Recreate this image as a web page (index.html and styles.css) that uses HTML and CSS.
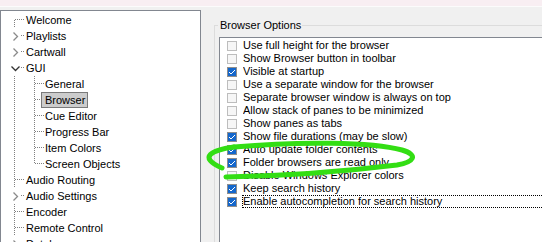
FILE: index.html
```html
<!DOCTYPE html>
<html lang="en">
<head>
    <meta charset="UTF-8">
    <meta name="viewport" content="width=device-width, initial-scale=1.0">
    <title>Options - Browser</title>
    <link rel="stylesheet" href="styles.css">
</head>
<body>

    <div class="caption"></div>

    <div class="main">

        <div class="tree">
            <div class="node lvl0 first"><span class="label">Welcome</span></div>
            <div class="node lvl0 kids"><span class="chev"><svg width="7" height="9" viewBox="0 0 7 9"><polyline points="1.5,0.5 5.5,4.5 1.5,8.5" fill="none" stroke="#8a8a8a" stroke-width="1.3"/></svg></span><span class="label">Playlists</span></div>
            <div class="node lvl0 kids"><span class="chev"><svg width="7" height="9" viewBox="0 0 7 9"><polyline points="1.5,0.5 5.5,4.5 1.5,8.5" fill="none" stroke="#8a8a8a" stroke-width="1.3"/></svg></span><span class="label">Cartwall</span></div>
            <div class="node lvl0 kids open"><span class="chev"><svg width="9" height="7" viewBox="0 0 9 7"><polyline points="0.5,1.5 4.5,5.5 8.5,1.5" fill="none" stroke="#333" stroke-width="1.3"/></svg></span><span class="label">GUI</span></div>
            <div class="node lvl1"><span class="label">General</span></div>
            <div class="node lvl1"><span class="label selected">Browser</span></div>
            <div class="node lvl1"><span class="label">Cue Editor</span></div>
            <div class="node lvl1"><span class="label">Progress Bar</span></div>
            <div class="node lvl1"><span class="label">Item Colors</span></div>
            <div class="node lvl1 last"><span class="label">Screen Objects</span></div>
            <div class="node lvl0"><span class="label">Audio Routing</span></div>
            <div class="node lvl0 kids"><span class="chev"><svg width="7" height="9" viewBox="0 0 7 9"><polyline points="1.5,0.5 5.5,4.5 1.5,8.5" fill="none" stroke="#8a8a8a" stroke-width="1.3"/></svg></span><span class="label">Audio Settings</span></div>
            <div class="node lvl0"><span class="label">Encoder</span></div>
            <div class="node lvl0"><span class="label">Remote Control</span></div>
            <div class="node lvl0 kids"><span class="chev"><svg width="7" height="9" viewBox="0 0 7 9"><polyline points="1.5,0.5 5.5,4.5 1.5,8.5" fill="none" stroke="#8a8a8a" stroke-width="1.3"/></svg></span><span class="label">Database</span></div>
        </div>

        <div class="page">
            <fieldset class="group">
                <legend>Browser Options</legend>
                <div class="checklist">
                    <div class="item"><span class="cb"></span><span class="text">Use full height for the browser</span></div>
                    <div class="item"><span class="cb"></span><span class="text">Show Browser button in toolbar</span></div>
                    <div class="item"><span class="cb on"><svg width="8" height="8" viewBox="0 0 8 8"><polyline points="1,4 3,6 7,2" fill="none" stroke="#fff" stroke-width="1"/></svg></span><span class="text">Visible at startup</span></div>
                    <div class="item"><span class="cb"></span><span class="text">Use a separate window for the browser</span></div>
                    <div class="item"><span class="cb"></span><span class="text">Separate browser window is always on top</span></div>
                    <div class="item"><span class="cb"></span><span class="text">Allow stack of panes to be minimized</span></div>
                    <div class="item"><span class="cb"></span><span class="text">Show panes as tabs</span></div>
                    <div class="item"><span class="cb on"><svg width="8" height="8" viewBox="0 0 8 8"><polyline points="1,4 3,6 7,2" fill="none" stroke="#fff" stroke-width="1"/></svg></span><span class="text">Show file durations (may be slow)</span></div>
                    <div class="item"><span class="cb on"><svg width="8" height="8" viewBox="0 0 8 8"><polyline points="1,4 3,6 7,2" fill="none" stroke="#fff" stroke-width="1"/></svg></span><span class="text">Auto update folder contents</span></div>
                    <div class="item"><span class="cb on"><svg width="8" height="8" viewBox="0 0 8 8"><polyline points="1,4 3,6 7,2" fill="none" stroke="#fff" stroke-width="1"/></svg></span><span class="text">Folder browsers are read only</span></div>
                    <div class="item"><span class="cb"></span><span class="text">Disable Windows Explorer colors</span></div>
                    <div class="item"><span class="cb on"><svg width="8" height="8" viewBox="0 0 8 8"><polyline points="1,4 3,6 7,2" fill="none" stroke="#fff" stroke-width="1"/></svg></span><span class="text">Keep search history</span></div>
                    <div class="item"><span class="cb on"><svg width="8" height="8" viewBox="0 0 8 8"><polyline points="1,4 3,6 7,2" fill="none" stroke="#fff" stroke-width="1"/></svg></span><span class="text focus">Enable autocompletion for search history</span></div>
                </div>
            </fieldset>
        </div>

    </div>

    <!-- hand-drawn highlight round the "read only" option -->
    <svg class="scribble" width="542" height="242" viewBox="0 0 542 242">
        <path d="M234 147 C300 141 372 142 402 150 C419 155 414 162 397 165 C340 172 280 176 226 177" fill="none" stroke="#33de14" stroke-width="5" stroke-linecap="round"/>
        <path d="M234 147 C212 150 197 157 222 168" fill="none" stroke="#33de14" stroke-width="5" stroke-linecap="round"/>
    </svg>

</body>
</html>
```

FILE: styles.css
```css
body {
    margin: 0;
    background-color: #f0f0f0;
    font-family: "Liberation Sans", Arial, sans-serif;
    font-size: 11px;
    color: #000;
    overflow: hidden;
    height: 242px;
}

.caption {
    height: 6px;
    background-color: #f8eef2;
    border-bottom: 1px solid #fbfbfb;
    margin-bottom: 3px;
}

.main {
    display: flex;
}

/* left tree */
.tree {
    flex: none;
    width: 199px;
    height: 260px;
    background-color: #fff;
    border: 1px solid #828790;
    border-bottom: none;
    padding-top: 1px;
}

.node {
    height: 16px;
    display: flex;
    align-items: center;
    position: relative;
    background-repeat: no-repeat;
}

.lvl0 {
    padding-left: 21px;
    background-image:
        repeating-linear-gradient(#808080 0 1px, transparent 1px 2px),
        repeating-linear-gradient(to right, #808080 0 1px, transparent 1px 2px);
    background-position: 13px 0, 14px 7px;
    background-size: 1px 16px, 10px 1px;
}

.lvl0.first {
    background-position: 13px 8px, 14px 7px;
    background-size: 1px 8px, 10px 1px;
}

.lvl1 {
    padding-left: 40px;
    background-image:
        repeating-linear-gradient(#808080 0 1px, transparent 1px 2px),
        repeating-linear-gradient(#808080 0 1px, transparent 1px 2px),
        repeating-linear-gradient(to right, #808080 0 1px, transparent 1px 2px);
    background-position: 13px 0, 33px 0, 34px 7px;
    background-size: 1px 16px, 1px 16px, 10px 1px;
}

.lvl1.last {
    background-size: 1px 16px, 1px 8px, 10px 1px;
}

.chev {
    position: absolute;
    left: 8px;
    top: 0;
    width: 12px;
    height: 16px;
    background-color: #fff;
    display: flex;
    align-items: center;
    justify-content: center;
}

.label {
    height: 14px;
    line-height: 14px;
    padding: 0 2px 0 3px;
    border: 1px solid transparent;
    white-space: nowrap;
}

.label.selected {
    background-color: #cccccc;
    border-color: #7a7a7a;
}

/* right page */
.page {
    flex: 1;
    min-width: 0;
    overflow: hidden;
    padding: 9px 0 0 13px;
}

.group {
    margin: 0;
    min-width: 0;
    padding: 0 0 0 4px;
    border: 1px solid #dcdcdc;
    border-right: none;
    border-bottom: none;
    height: 240px;
}

.group legend {
    padding: 0 1px 0 2px;
    margin-left: -1px;
    line-height: 13px;
}

.checklist {
    margin-top: 5px;
    height: 220px;
    background-color: #fff;
    border: 1px solid #828790;
    border-right: none;
    padding-top: 1px;
    overflow: hidden;
}

.item {
    height: 13px;
    display: flex;
    align-items: center;
}

.cb {
    flex: none;
    box-sizing: border-box;
    width: 10px;
    height: 10px;
    margin-left: 7px;
    border: 1px solid #bdbdbd;
    background-color: #f6f6f6;
    display: flex;
    align-items: center;
    justify-content: center;
}

.cb.on {
    border-color: #8e8e8e;
    background-color: #1467cc;
}

.text {
    flex: 1;
    height: 11px;
    line-height: 11px;
    margin-left: 5px;
    border: 1px dotted transparent;
    border-right: none;
    white-space: nowrap;
    overflow: hidden;
}

.text.focus {
    border-color: #000;
}

.scribble {
    position: absolute;
    left: 0;
    top: 0;
    pointer-events: none;
}
```
